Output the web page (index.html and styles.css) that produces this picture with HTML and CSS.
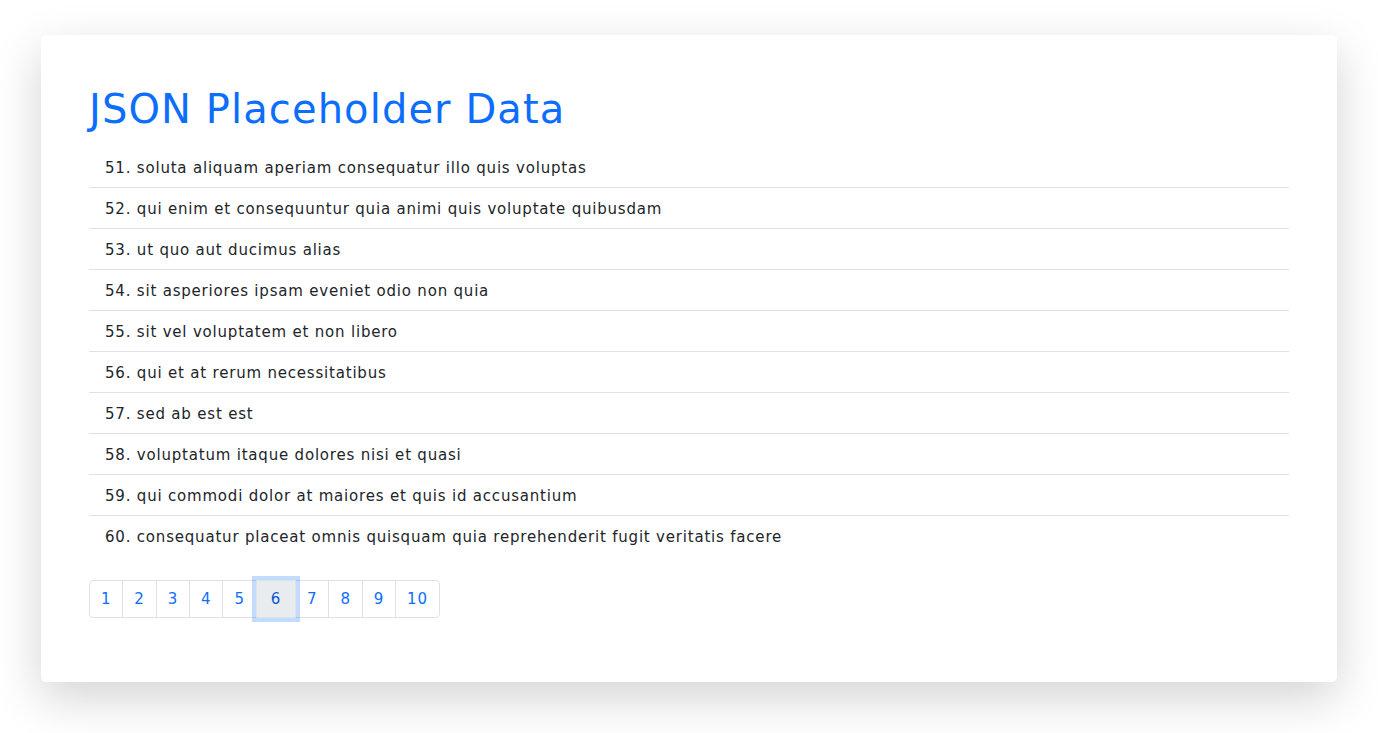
FILE: index.html
```html
<!DOCTYPE html>
<html lang="en">
<head>
<meta charset="utf-8">
<title>JSON Placeholder Data</title>
<link rel="stylesheet" href="styles.css">
</head>
<body>
<main class="card">
  <h1 class="title">JSON Placeholder Data</h1>
  <ul class="list">
    <li class="item">51. soluta aliquam aperiam consequatur illo quis voluptas</li>
    <li class="item">52. qui enim et consequuntur quia animi quis voluptate quibusdam</li>
    <li class="item">53. ut quo aut ducimus alias</li>
    <li class="item">54. sit asperiores ipsam eveniet odio non quia</li>
    <li class="item">55. sit vel voluptatem et non libero</li>
    <li class="item">56. qui et at rerum necessitatibus</li>
    <li class="item">57. sed ab est est</li>
    <li class="item">58. voluptatum itaque dolores nisi et quasi</li>
    <li class="item">59. qui commodi dolor at maiores et quis id accusantium</li>
    <li class="item">60. consequatur placeat omnis quisquam quia reprehenderit fugit veritatis facere</li>
  </ul>
  <nav class="pagination">
    <a class="page">1</a>
    <a class="page">2</a>
    <a class="page">3</a>
    <a class="page">4</a>
    <a class="page">5</a>
    <a class="page active">6</a>
    <a class="page">7</a>
    <a class="page">8</a>
    <a class="page">9</a>
    <a class="page">10</a>
  </nav>
</main>
</body>
</html>
```
FILE: styles.css
```css
* { box-sizing: border-box; }
html, body { margin: 0; background: #fff; }
body {
  font-family: "DejaVu Sans", sans-serif;
  color: #212529;
  padding: 35px 41px 51px;
  min-height: 733px;
}
.card {
  background: #fff;
  border-radius: 5px;
  box-shadow: 0 16px 48px rgba(0,0,0,.175);
  padding: 49px 48px 64px;
}
.title {
  margin: 0 0 14px;
  padding-top: 1px;
  font-size: 40px;
  font-weight: 400;
  line-height: 48px;
  color: #0d6efd;
  letter-spacing: 1.1px;
}
.list {
  list-style: none;
  margin: 0 0 24px;
  padding: 0;
}
.item {
  padding: 9px 16px 7px;
  font-size: 15px;
  line-height: 24px;
  letter-spacing: 0.8px;
  border-bottom: 1px solid #dee2e6;
}
.item:last-child { border-bottom: 0; }
.pagination {
  display: flex;
}
.page {
  display: block;
  height: 38px;
  padding: 0 11px;
  line-height: 37px;
  font-size: 15px;
  letter-spacing: 0.8px;
  color: #0d6efd;
  border: 1px solid #dee2e6;
  margin-left: -1px;
}
.page:first-child { margin-left: 0; border-radius: 4px 0 0 4px; }
.page:last-child { border-radius: 0 4px 4px 0; }
.page.active {
  background: #e9ecef;
  color: #0a58ca;
  position: relative;
  z-index: 2;
  padding: 0 14px;
  box-shadow: 0 0 0 4px rgba(13,110,253,.25);
}
```
